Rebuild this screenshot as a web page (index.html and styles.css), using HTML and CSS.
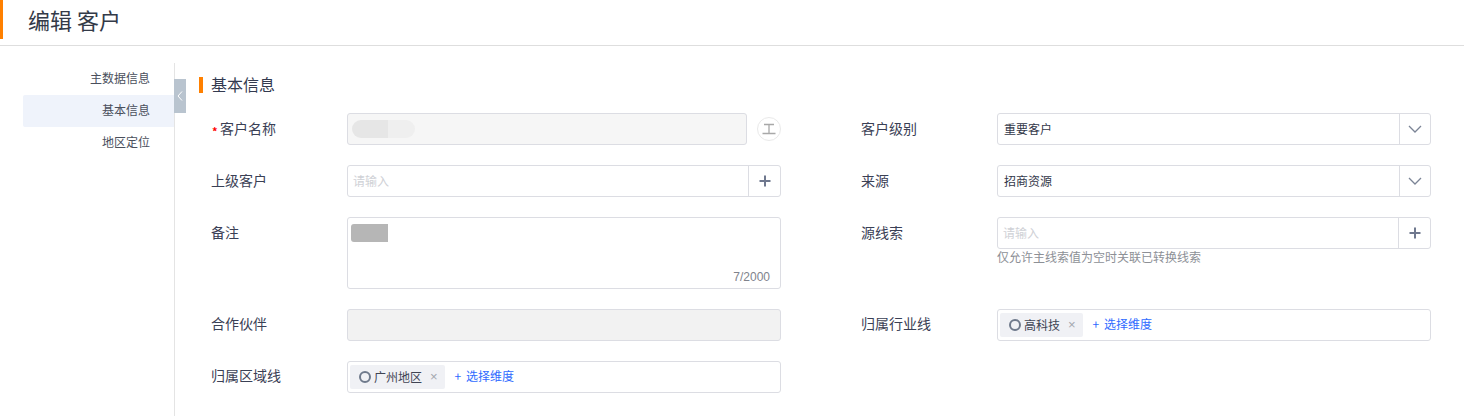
FILE: index.html
```html
<!DOCTYPE html>
<html lang="zh-CN">
<head>
<meta charset="utf-8">
<title>编辑 客户</title>
<link rel="stylesheet" href="styles.css">
</head>
<body>
<header class="page-header"><h1 class="page-title">编辑 客户</h1></header>
<div class="page-body">
  <nav class="side-nav">
    <a class="nav-item">主数据信息</a>
    <a class="nav-item active">基本信息</a>
    <a class="nav-item">地区定位</a>
    <span class="collapse-tab"><svg width="6" height="12" viewBox="0 0 6 12"><path d="M5 1.5 1 6l4 4.5" fill="none" stroke="#fff" stroke-width="1"/></svg></span>
  </nav>
  <main class="content">
    <h2 class="section-title">基本信息</h2>
    <div class="form-grid">
      <div class="field">
        <label class="field-label required">客户名称</label>
        <div class="name-wrap">
          <div class="control disabled-light"><span class="mask-name"></span></div>
          <span class="circle-icon"><svg width="14" height="12" viewBox="0 0 14 12"><path d="M2 1.5h10M7 1.5v9M.5 10.5h13" fill="none" stroke="#a8a8a8" stroke-width="1.3"/></svg></span>
        </div>
      </div>
      <div class="field">
        <label class="field-label">客户级别</label>
        <div class="control select"><span class="value">重要客户</span><span class="addon narrow"><svg width="14" height="8" viewBox="0 0 14 8"><path d="M1 1l6 6 6-6" fill="none" stroke="#7b8496" stroke-width="1.3"/></svg></span></div>
      </div>
      <div class="field">
        <label class="field-label">上级客户</label>
        <div class="control"><span class="placeholder">请输入</span><span class="addon"><svg class="plus" width="12" height="12" viewBox="0 0 12 12"><path d="M6 .5v11M.5 6h11" fill="none" stroke="#6f788e" stroke-width="2"/></svg></span></div>
      </div>
      <div class="field">
        <label class="field-label">来源</label>
        <div class="control select"><span class="value">招商资源</span><span class="addon narrow"><svg width="14" height="8" viewBox="0 0 14 8"><path d="M1 1l6 6 6-6" fill="none" stroke="#7b8496" stroke-width="1.3"/></svg></span></div>
      </div>
      <div class="field">
        <label class="field-label">备注</label>
        <div class="control textarea"><span class="mask-note"></span><span class="counter">7/2000</span></div>
      </div>
      <div class="field">
        <label class="field-label">源线索</label>
        <div class="stack">
          <div class="control"><span class="placeholder">请输入</span><span class="addon"><svg class="plus" width="12" height="12" viewBox="0 0 12 12"><path d="M6 .5v11M.5 6h11" fill="none" stroke="#6f788e" stroke-width="2"/></svg></span></div>
          <p class="hint">仅允许主线索值为空时关联已转换线索</p>
        </div>
      </div>
      <div class="field">
        <label class="field-label low">合作伙伴</label>
        <div class="control disabled"></div>
      </div>
      <div class="field">
        <label class="field-label low">归属行业线</label>
        <div class="control tags"><span class="tag"><i class="ring"></i>高科技<span class="tag-x">×</span></span><a class="add-link">+ 选择维度</a></div>
      </div>
      <div class="field">
        <label class="field-label low">归属区域线</label>
        <div class="control tags"><span class="tag"><i class="ring"></i>广州地区<span class="tag-x">×</span></span><a class="add-link">+ 选择维度</a></div>
      </div>
    </div>
  </main>
</div>
</body>
</html>
```
FILE: styles.css
```css
* { box-sizing: border-box; }
html, body { margin: 0; padding: 0; background: #fff; }
body { width: 1464px; height: 416px; overflow: hidden; font-family: "Noto Sans CJK SC", "Liberation Sans", sans-serif; color: #3a4055; }

.page-header { height: 46px; border-bottom: 1px solid #dedede; padding-bottom: 6px; }
.page-title { margin: 0; height: 39px; border-left: 3px solid #ff8000; padding-left: 25px; font-size: 22px; font-weight: 400; line-height: 38px; color: #333a48; }

.page-body { display: flex; padding: 17px 0 0 23px; align-items: flex-start; }

.side-nav { position: relative; width: 152px; height: 353px; border-right: 1px solid #e4e4e4; flex: none; }
.nav-item { display: block; height: 32px; line-height: 30px; padding-right: 24px; text-align: right; font-size: 12px; color: #4a4f5c; }
.nav-item.active { background: #eff3fb; border-radius: 2px 0 0 2px; }
.collapse-tab { position: absolute; left: 151px; top: 16px; width: 12px; height: 34px; background: #b9c4cf; display: flex; align-items: center; justify-content: center; }

.content { margin-left: 24px; flex: none; width: 1250px; }
.section-title { margin: 14px 0 20px; height: 16px; border-left: 4px solid #ff8000; padding-left: 8px; font-size: 16px; font-weight: 400; line-height: 15px; color: #333a4f; }

.form-grid { display: grid; grid-template-columns: 570px 570px; column-gap: 80px; row-gap: 20px; margin-left: 12px; }
.field { display: flex; align-items: flex-start; }
.field-label { position: relative; width: 136px; flex: none; font-size: 14px; line-height: 30px; color: #3a4055; }
.field-label.low { line-height: 29px; }
.field-label.required { padding-left: 9px; }
.field-label.required::before { content: "*"; position: absolute; left: 1px; top: 3px; color: #f00; font-size: 11px; font-weight: 700; }

.control { position: relative; display: flex; align-items: center; width: 434px; height: 32px; border: 1px solid #dcdde3; border-radius: 3px; background: #fff; font-size: 12px; }
.disabled-light { width: 400px; background: #f6f6f6; }
.disabled { background: #f2f2f2; }
.name-wrap { display: flex; align-items: center; gap: 10px; }
.circle-icon { width: 24px; height: 24px; border: 1.5px solid #e9e9e9; border-radius: 50%; display: flex; align-items: center; justify-content: center; }
.mask-name { width: 63px; height: 18px; margin-left: 4px; border-radius: 9px; background: linear-gradient(90deg, #e6e6e6 0 36px, #efefef 36px); }
.mask-note { position: absolute; left: 3px; top: 6px; width: 37px; height: 18px; border-radius: 3px 0 0 3px; background: #b6b6b6; }
.placeholder { flex: 1; padding: 0 0 2px 5px; color: #cfd1d6; }
.value { flex: 1; padding: 0 0 2px 6px; color: #33384a; }
.addon { width: 32px; height: 30px; flex: none; border-left: 1px solid #dcdde3; display: flex; align-items: center; justify-content: center; }
.addon.narrow { width: 31px; }
.textarea { height: 72px; }
.counter { position: absolute; right: 10px; bottom: 4px; font-family: "Liberation Sans", sans-serif; font-size: 12px; line-height: 14px; color: #80838c; }
.stack { display: flex; flex-direction: column; }
.hint { margin: 0; font-size: 12px; line-height: 16px; color: #8d9096; }
.tags { padding-left: 2px; }
.tag { display: flex; align-items: center; height: 24px; padding: 0 7px 0 9px; background: #f0f1f5; border-radius: 2px; color: #3f4454; line-height: 22px; }
.ring { width: 12px; height: 12px; border: 2px solid #6f7a8c; border-radius: 50%; margin-right: 3px; }
.tag-x { margin-left: 8px; color: #a4a7ae; font-size: 13px; font-family: "Liberation Sans", sans-serif; }
.add-link { margin-left: 10px; padding-bottom: 3px; color: #2f6bff; word-spacing: 2px; }
```
